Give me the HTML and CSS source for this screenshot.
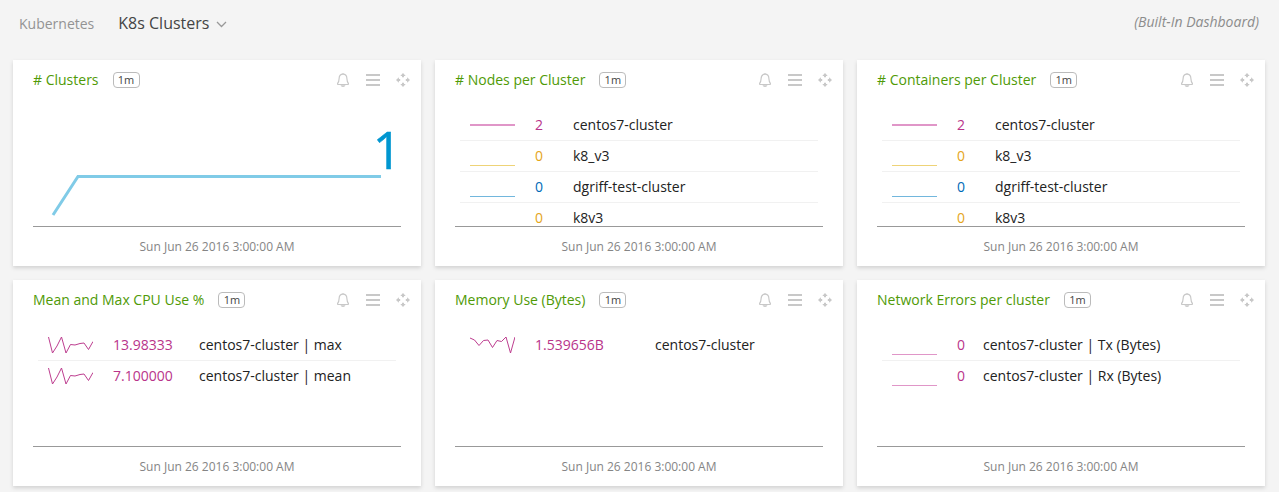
FILE: index.html
```html
<!DOCTYPE html>
<html lang="en">
<head>
<meta charset="utf-8">
<title>K8s Clusters</title>
<link rel="stylesheet" href="styles.css">
</head>
<body>
<svg class="defs" width="0" height="0">
  <symbol id="tools" viewBox="0 0 75 16">
    <g fill="none" stroke="#c8c8c8">
      <path d="M1.6 11.5C3 9.8 3 8.600 3.100 6.500C3.200 3.800 4.700 2.200 7 2.200S10.800 3.800 10.900 6.500C11 8.600 11 9.800 12.400 11.500Q12.600 12.500 11.500 12.500H2.500Q1.400 12.500 1.600 11.500Z" stroke-width="1.200"/>
      <path d="M7 1V2.200"/>
      <path d="M30 3H44M30 8H44M30 13H44" stroke-width="2"/>
    </g>
    <g fill="#c8c8c8">
      <path d="M4.500 13.300H9.500Q9 15 7 15T4.500 13.300Z"/>
      <path d="M67 1L69.700 3.900H68V5.200H66V3.900H64.300ZM67 15L64.300 12.100H66V10.800H68V12.100H69.700ZM60 8L62.900 5.300V7H64.200V9H62.900V10.700ZM74 8L71.100 10.700V9H69.800V7H71.100V5.300Z"/>
    </g>
  </symbol>
</svg>
<header class="topbar">
  <span class="group">Kubernetes</span>
  <span class="current">K8s Clusters</span>
  <svg class="chevron" width="11" height="7" viewBox="0 0 11 7"><path d="M1 1L5.500 5.500L10 1" fill="none" stroke="#999" stroke-width="1.300"/></svg>
  <span class="builtin">(Built-In Dashboard)</span>
</header>
<main class="grid">
  <section class="card">
    <div class="head"><h2># Clusters</h2><span class="res">1m</span><svg class="tools"><use href="#tools"/></svg></div>
    <div class="body chart">
      <svg class="plot" width="368" height="126" viewBox="0 0 368 126"><path d="M20 115L45 76.500H348" fill="none" stroke="#80cbe7" stroke-width="3"/></svg>
      <span class="big">1</span>
    </div>
    <div class="foot">Sun Jun 26 2016 3:00:00 AM</div>
  </section>
  <section class="card">
    <div class="head"><h2># Nodes per Cluster</h2><span class="res">1m</span><svg class="tools"><use href="#tools"/></svg></div>
    <div class="body">
      <div class="row count"><svg class="spark pink"><path d="M0 15H45" stroke-width="2"/></svg><span class="val pink">2</span><span>centos7-cluster</span></div>
      <div class="row count"><svg class="spark yellow"><path d="M0 24.500H45"/></svg><span class="val yellow">0</span><span>k8_v3</span></div>
      <div class="row count"><svg class="spark blue"><path d="M0 24.500H45"/></svg><span class="val blue">0</span><span>dgriff-test-cluster</span></div>
      <div class="row count"><svg class="spark yellow"><path d="M0 24.500H45"/></svg><span class="val yellow">0</span><span>k8v3</span></div>
    </div>
    <div class="foot">Sun Jun 26 2016 3:00:00 AM</div>
  </section>
  <section class="card">
    <div class="head"><h2># Containers per Cluster</h2><span class="res">1m</span><svg class="tools"><use href="#tools"/></svg></div>
    <div class="body">
      <div class="row count"><svg class="spark pink"><path d="M0 15H45" stroke-width="2"/></svg><span class="val pink">2</span><span>centos7-cluster</span></div>
      <div class="row count"><svg class="spark yellow"><path d="M0 24.500H45"/></svg><span class="val yellow">0</span><span>k8_v3</span></div>
      <div class="row count"><svg class="spark blue"><path d="M0 24.500H45"/></svg><span class="val blue">0</span><span>dgriff-test-cluster</span></div>
      <div class="row count"><svg class="spark yellow"><path d="M0 24.500H45"/></svg><span class="val yellow">0</span><span>k8v3</span></div>
    </div>
    <div class="foot">Sun Jun 26 2016 3:00:00 AM</div>
  </section>
  <section class="card">
    <div class="head"><h2>Mean and Max CPU Use %</h2><span class="res">1m</span><svg class="tools"><use href="#tools"/></svg></div>
    <div class="body">
      <div class="row cpu"><svg class="spark pink wave"><path d="M.5 7L4.500 23L9 16L13.500 7L18 23L22.500 14.500L27 15L32 13.500L36 13L40.500 19.500L45 11.500"/></svg><span class="val pink">13.98333</span><span>centos7-cluster | max</span></div>
      <div class="row cpu"><svg class="spark pink wave"><path d="M.5 7L4.500 23L9 16L13.500 7L18 23L22.500 14.500L27 15L32 13.500L36 13L40.500 19.500L45 11.500"/></svg><span class="val pink">7.100000</span><span>centos7-cluster | mean</span></div>
    </div>
    <div class="foot">Sun Jun 26 2016 3:00:00 AM</div>
  </section>
  <section class="card">
    <div class="head"><h2>Memory Use (Bytes)</h2><span class="res">1m</span><svg class="tools"><use href="#tools"/></svg></div>
    <div class="body">
      <div class="row memory"><svg class="spark pink wave"><path d="M0 8L4.500 10L9 15.500L13.500 10.500L18 10L22.500 17.500L27 10.500L31.500 11.500L36 7L40.500 23L45 7"/></svg><span class="val pink">1.539656B</span><span>centos7-cluster</span></div>
    </div>
    <div class="foot">Sun Jun 26 2016 3:00:00 AM</div>
  </section>
  <section class="card">
    <div class="head"><h2>Network Errors per cluster</h2><span class="res">1m</span><svg class="tools"><use href="#tools"/></svg></div>
    <div class="body">
      <div class="row network"><svg class="spark pink"><path d="M0 24.500H45"/></svg><span class="val pink">0</span><span>centos7-cluster | Tx (Bytes)</span></div>
      <div class="row network"><svg class="spark pink"><path d="M0 24.500H45"/></svg><span class="val pink">0</span><span>centos7-cluster | Rx (Bytes)</span></div>
    </div>
    <div class="foot">Sun Jun 26 2016 3:00:00 AM</div>
  </section>
</main>
</body>
</html>
```
FILE: styles.css
```css
* { box-sizing: border-box; }
body {
  margin: 0;
  height: 492px;
  overflow: hidden;
  background: #f4f4f4;
  font-family: "Open Sans", "Noto Sans", sans-serif;
  font-size: 14px;
  color: #222;
}
.defs { display: block; }
.topbar {
  display: flex;
  align-items: center;
  height: 60px;
  padding: 0 20px 13px 19px;
}
.group { color: #939393; }
.current { margin: -2px 0 0 24px; font-size: 16px; color: #444; }
.chevron { margin: 1px 0 0 7px; }
.builtin { margin: -4px 0 0 auto; font-size: 14px; font-style: italic; color: #8c8c8c; }
.grid {
  display: grid;
  grid-template-columns: repeat(3, 408px);
  grid-auto-rows: 206px;
  gap: 14px;
  padding-left: 13px;
}
.card {
  background: #fff;
  padding: 0 20px;
  box-shadow: 0 2px 4px rgba(0, 0, 0, .14);
}
.head { display: flex; align-items: center; height: 40px; margin-right: -10px; }
.head h2 { margin: 0; padding-bottom: 2px; font-size: 14px; font-weight: 400; color: #4f9a06; }
.res {
  width: 27px;
  height: 16px;
  margin-left: 14px;
  border: 1px solid #bbb;
  border-radius: 4px;
  font-size: 11px;
  line-height: 14px;
  text-align: center;
  color: #444;
}
.tools { width: 75px; height: 16px; margin-left: auto; }
.body { height: 127px; padding: 10px 5px 0; overflow: hidden; border-bottom: 1px solid #999; }
.chart { position: relative; padding: 0; }
.plot { display: block; }
.big {
  position: absolute;
  right: -1px;
  top: 15px;
  font-size: 51px;
  line-height: 68px;
  color: #0096d0;
  -webkit-text-stroke: .5px #0096d0;
}
.row {
  display: grid;
  align-items: center;
  height: 31px;
  padding-left: 10px;
  border-bottom: 1px solid #f1f1f1;
  white-space: nowrap;
}
.row span { padding-bottom: 2px; }
.row:last-child { border-bottom-color: transparent; }
.count { grid-template-columns: 65px 38px 1fr; }
.cpu { grid-template-columns: 65px 86px 1fr; }
.memory { grid-template-columns: 65px 120px 1fr; }
.network { grid-template-columns: 65px 26px 1fr; }
.spark { width: 45px; height: 30px; fill: none; stroke-width: 1; }
.spark.pink { stroke: #e096c8; }
.spark.wave { stroke: #bd3d8f; }
.spark.yellow { stroke: #eed377; }
.spark.blue { stroke: #72b7dd; }
.val.pink { color: #b9348a; }
.val.yellow { color: #e5a51b; }
.val.blue { color: #006bb8; }
.foot { height: 39px; line-height: 39px; text-align: center; font-size: 12px; color: #858585; }
```
